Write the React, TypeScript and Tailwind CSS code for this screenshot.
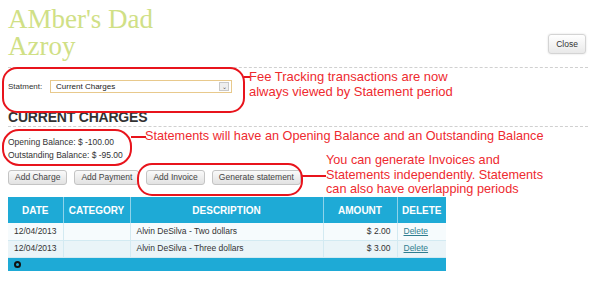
import React from "react";

const rows = [
  { date: "12/04/2013", category: "", description: "Alvin DeSilva - Two dollars", amount: "$ 2.00" },
  { date: "12/04/2013", category: "", description: "Alvin DeSilva - Three dollars", amount: "$ 3.00" },
];

function ActionButton({ label }: { label: string }) {
  return (
    <button className="h-[15px] rounded-[3px] border border-[#c4c4c4] bg-gradient-to-b from-[#fafafa] to-[#e2e2e2] px-[6px] text-[8.5px] leading-[13px] text-[#444]">
      {label}
    </button>
  );
}

export default function App() {
  return (
    <div className="relative h-[283px] w-[600px] overflow-hidden bg-white font-['Liberation_Sans',Arial,sans-serif]">
      <div className="pl-2 pr-3 pt-[6px]">
        <div className="flex items-start justify-between">
          <h1 className="font-['Liberation_Serif',serif] text-[27px] font-normal leading-[27px] text-[#d0e086]">
            AMber's Dad
            <br />
            Azroy
          </h1>
          <button className="mr-[2px] mt-[28px] h-5 w-[38px] rounded-[3px] border border-[#d4d4d4] bg-gradient-to-b from-white to-[#e9e9e9] text-[8.5px] text-[#333] shadow-[0_0_2px_rgba(0,0,0,0.15)]">
            Close
          </button>
        </div>

        <div className="mt-[7px] border-t border-dashed border-[#d0d0d0]" />

        <div className="mt-[12px] flex h-[13px] items-center">
          <span className="w-[42px] text-[8px] text-[#333]">Statment:</span>
          <div className="flex h-[13px] w-[182px] items-center justify-between border border-[#e8c98c] bg-white pl-[5px] pr-[2px]">
            <span className="text-[8px] text-[#222]">Current Charges</span>
            <span className="flex h-[9px] w-[10px] items-center justify-center border border-[#c8c8c8] bg-[#eee] text-[6px] leading-none text-[#555]">
              ⌄
            </span>
          </div>
        </div>

        <h2 className="mt-[16px] text-[14px] font-bold leading-[16px] tracking-[-0.2px] text-[#333]">CURRENT CHARGES</h2>

        <div className="mt-[1px] border-t border-dashed border-[#d0d0d0]" />

        <div className="mt-[9px] text-[8.5px] leading-[13px] text-[#333]">
          <div>Opening Balance: $ -100.00</div>
          <div>Outstanding Balance: $ -95.00</div>
        </div>

        <div className="mt-[8px] flex gap-[7px]">
          <ActionButton label="Add Charge" />
          <ActionButton label="Add Payment" />
          <ActionButton label="Add Invoice" />
          <ActionButton label="Generate statement" />
        </div>

        <table className="mt-[12px] w-[438px] table-fixed border-collapse text-[8.5px]">
          <colgroup>
            <col className="w-[55px]" />
            <col className="w-[67px]" />
            <col className="w-[193px]" />
            <col className="w-[74px]" />
            <col className="w-[49px]" />
          </colgroup>
          <thead>
            <tr className="h-[26px] bg-[#1eaad6] text-[10px] font-bold text-white">
              <th className="border-r border-[#8fd3ea]">DATE</th>
              <th className="border-r border-[#8fd3ea]">CATEGORY</th>
              <th className="border-r border-[#8fd3ea]">DESCRIPTION</th>
              <th className="border-r border-[#8fd3ea]">AMOUNT</th>
              <th>DELETE</th>
            </tr>
          </thead>
          <tbody className="text-[#333]">
            {rows.map((r, i) => (
              <tr key={i} className={`h-[17px] border-b border-[#d3eaf2] ${i % 2 === 0 ? "bg-[#f6fbfd]" : "bg-[#eaf4f8]"}`}>
                <td className="border-r border-[#d3eaf2] pl-[6px]">{r.date}</td>
                <td className="border-r border-[#d3eaf2]">{r.category}</td>
                <td className="border-r border-[#d3eaf2] pl-[6px]">{r.description}</td>
                <td className="border-r border-[#d3eaf2] pr-[6px] text-right">{r.amount}</td>
                <td className="pl-[6px]">
                  <a className="text-[#2e7d8f] underline">Delete</a>
                </td>
              </tr>
            ))}
            <tr className="h-[14px] bg-[#1eaad6]">
              <td colSpan={5} className="pl-[6px]">
                <div className="h-[7px] w-[7px] rounded-full border-2 border-[#111]" />
              </td>
            </tr>
          </tbody>
        </table>
      </div>

      {/* annotation overlay */}
      <div className="pointer-events-none absolute left-[2px] top-[67px] h-[46px] w-[243px] rounded-[15px] border-[2.5px] border-[#e8141c]" />
      <div className="absolute left-[244px] top-[76px] h-[2px] w-[6px] bg-[#e8141c]" />
      <div className="absolute left-[249px] top-[70px] text-[13px] leading-[14.5px] text-[#ee2a2f]">
        Fee Tracking transactions are now
        <br />
        always viewed by Statement period
      </div>

      <div className="pointer-events-none absolute left-[2px] top-[129px] h-[37px] w-[130px] rounded-[17px] border-[2.5px] border-[#e8141c]" />
      <div className="absolute left-[131px] top-[136px] h-[2px] w-[15px] bg-[#e8141c]" />
      <div className="absolute left-[145px] top-[129px] whitespace-nowrap text-[12.7px] leading-[14.5px] text-[#ee2a2f]">
        Statements will have an Opening Balance and an Outstanding Balance
      </div>

      <div className="pointer-events-none absolute left-[137px] top-[163px] h-[33px] w-[166px] rounded-[15px] border-[2.5px] border-[#e8141c]" />
      <div className="absolute left-[302px] top-[175px] h-[2px] w-[24px] bg-[#e8141c]" />
      <div className="absolute left-[326px] top-[153px] whitespace-nowrap text-[12.7px] leading-[14.5px] text-[#ee2a2f]">
        You can generate Invoices and
        <br />
        Statements independently. Statements
        <br />
        can also have overlapping periods
      </div>
    </div>
  );
}
